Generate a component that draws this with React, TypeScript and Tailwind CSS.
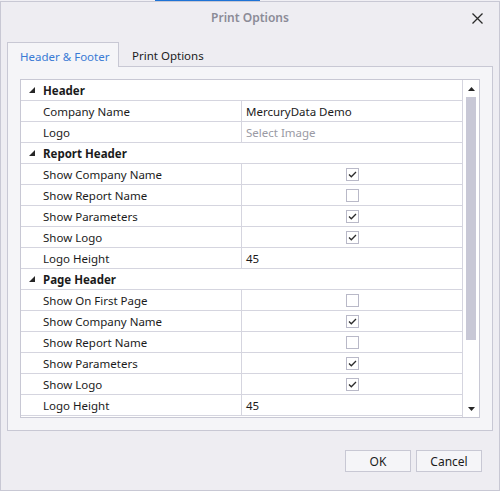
import { Fragment } from "react";

type Row =
  | { kind: "cat"; label: string }
  | { kind: "text"; label: string; value: string; muted?: boolean }
  | { kind: "check"; label: string; checked: boolean };

const rows: Row[] = [
  { kind: "cat", label: "Header" },
  { kind: "text", label: "Company Name", value: "MercuryData Demo" },
  { kind: "text", label: "Logo", value: "Select Image", muted: true },
  { kind: "cat", label: "Report Header" },
  { kind: "check", label: "Show Company Name", checked: true },
  { kind: "check", label: "Show Report Name", checked: false },
  { kind: "check", label: "Show Parameters", checked: true },
  { kind: "check", label: "Show Logo", checked: true },
  { kind: "text", label: "Logo Height", value: "45" },
  { kind: "cat", label: "Page Header" },
  { kind: "check", label: "Show On First Page", checked: false },
  { kind: "check", label: "Show Company Name", checked: true },
  { kind: "check", label: "Show Report Name", checked: false },
  { kind: "check", label: "Show Parameters", checked: true },
  { kind: "check", label: "Show Logo", checked: true },
  { kind: "text", label: "Logo Height", value: "45" },
];

function CheckBox({ checked }: { checked: boolean }) {
  return (
    <div className="w-[13px] h-[13px] border border-[#b9b9c8] bg-white flex items-center justify-center">
      {checked && (
        <svg width="11" height="11" viewBox="0 0 11 11">
          <path d="M2 5.5 L4.3 7.8 L9 3" fill="none" stroke="#2b2b2b" strokeWidth="1.3" />
        </svg>
      )}
    </div>
  );
}

function GridRow({ row }: { row: Row }) {
  if (row.kind === "cat") {
    return (
      <div className="h-[21px] border-b border-[#d5d5df] flex items-center pl-[8px]">
        <svg width="6" height="6" viewBox="0 0 6 6" className="mr-[8px]">
          <polygon points="6,0 6,6 0,6" fill="#262626" />
        </svg>
        <span className="font-bold pt-[1px]">{row.label}</span>
      </div>
    );
  }
  return (
    <div className="h-[21px] border-b border-[#d5d5df] flex">
      <div className="w-[221px] border-r border-[#d5d5df] pl-[22px] pt-[1px] flex items-center">
        {row.label}
      </div>
      <div className="flex-1 flex items-center">
        {row.kind === "text" ? (
          <span className={`pl-[4px] pt-[1px] ${row.muted ? "text-[#9a9aa4]" : ""}`}>{row.value}</span>
        ) : (
          <div className="flex-1 flex justify-center">
            <CheckBox checked={row.checked} />
          </div>
        )}
      </div>
    </div>
  );
}

export default function App() {
  return (
    <div className="w-[500px] h-[494px] bg-white font-['Noto_Sans',sans-serif] text-[11.5px] text-[#1b1b1b] leading-none">
      <div className="h-px flex">
        <div className="w-[155px] bg-[#f0eff4]" />
        <div className="w-[105px] bg-[#1e73d6]" />
        <div className="flex-1 bg-[#f0eff4]" />
      </div>
      <div className="w-[500px] h-[490px] border border-[#c8c8d4] bg-[#eeedf2] flex flex-col">
        <div className="h-[32px] grid grid-cols-[1fr_auto_1fr] items-center">
          <div />
          <div className="font-semibold text-[#8b8b97] text-[12px]">Print Options</div>
          <div className="flex justify-end pr-[16px]">
            <svg width="11" height="11" viewBox="0 0 11 11">
              <path d="M0.5 0.5 L10.5 10.5 M10.5 0.5 L0.5 10.5" stroke="#2a2a2a" strokeWidth="1.3" />
            </svg>
          </div>
        </div>

        <div className="mt-[8px] pl-[6px] flex h-[24px]">
          <div className="relative z-10 w-[112px] h-[25px] border-l border-t border-r border-[#c8c8d4] bg-[#f5f5f8] pl-[12px] pt-[3px] flex items-center text-[#3a7bd5]">
            Header &amp; Footer
          </div>
          <div className="pl-[13px] pt-[3px] flex items-center">Print Options</div>
        </div>

        <div className="mx-[6px] h-[365px] border border-[#c8c8d4] bg-[#f5f5f8] p-[12px]">
          <div className="w-[460px] h-[339px] border border-[#c8c8d4] bg-white flex">
            <div className="flex-1 overflow-hidden">
              {rows.map((r, i) => (
                <Fragment key={i}>
                  <GridRow row={r} />
                </Fragment>
              ))}
            </div>
            <div className="w-[17px] border-l border-[#d5d5df] flex flex-col">
              <div className="h-[17px] flex items-center justify-center">
                <svg width="7" height="4" viewBox="0 0 7 4">
                  <polygon points="3.5,0 7,4 0,4" fill="#262626" />
                </svg>
              </div>
              <div className="mx-auto w-[10px] h-[243px] bg-[#c8c8d6]" />
              <div className="flex-1" />
              <div className="h-[17px] flex items-center justify-center">
                <svg width="7" height="4" viewBox="0 0 7 4">
                  <polygon points="0,0 7,0 3.5,4" fill="#262626" />
                </svg>
              </div>
            </div>
          </div>
        </div>

        <div className="mt-[19px] pr-[17px] flex justify-end gap-[5px]">
          <button className="w-[66px] h-[22px] border border-[#c8c8d4] bg-[#f5f5f8] text-[12px] text-[#1b1b1b] pt-[1px]">
            OK
          </button>
          <button className="w-[66px] h-[22px] border border-[#c8c8d4] bg-[#f5f5f8] text-[12px] text-[#1b1b1b] pt-[1px]">
            Cancel
          </button>
        </div>
      </div>
    </div>
  );
}
